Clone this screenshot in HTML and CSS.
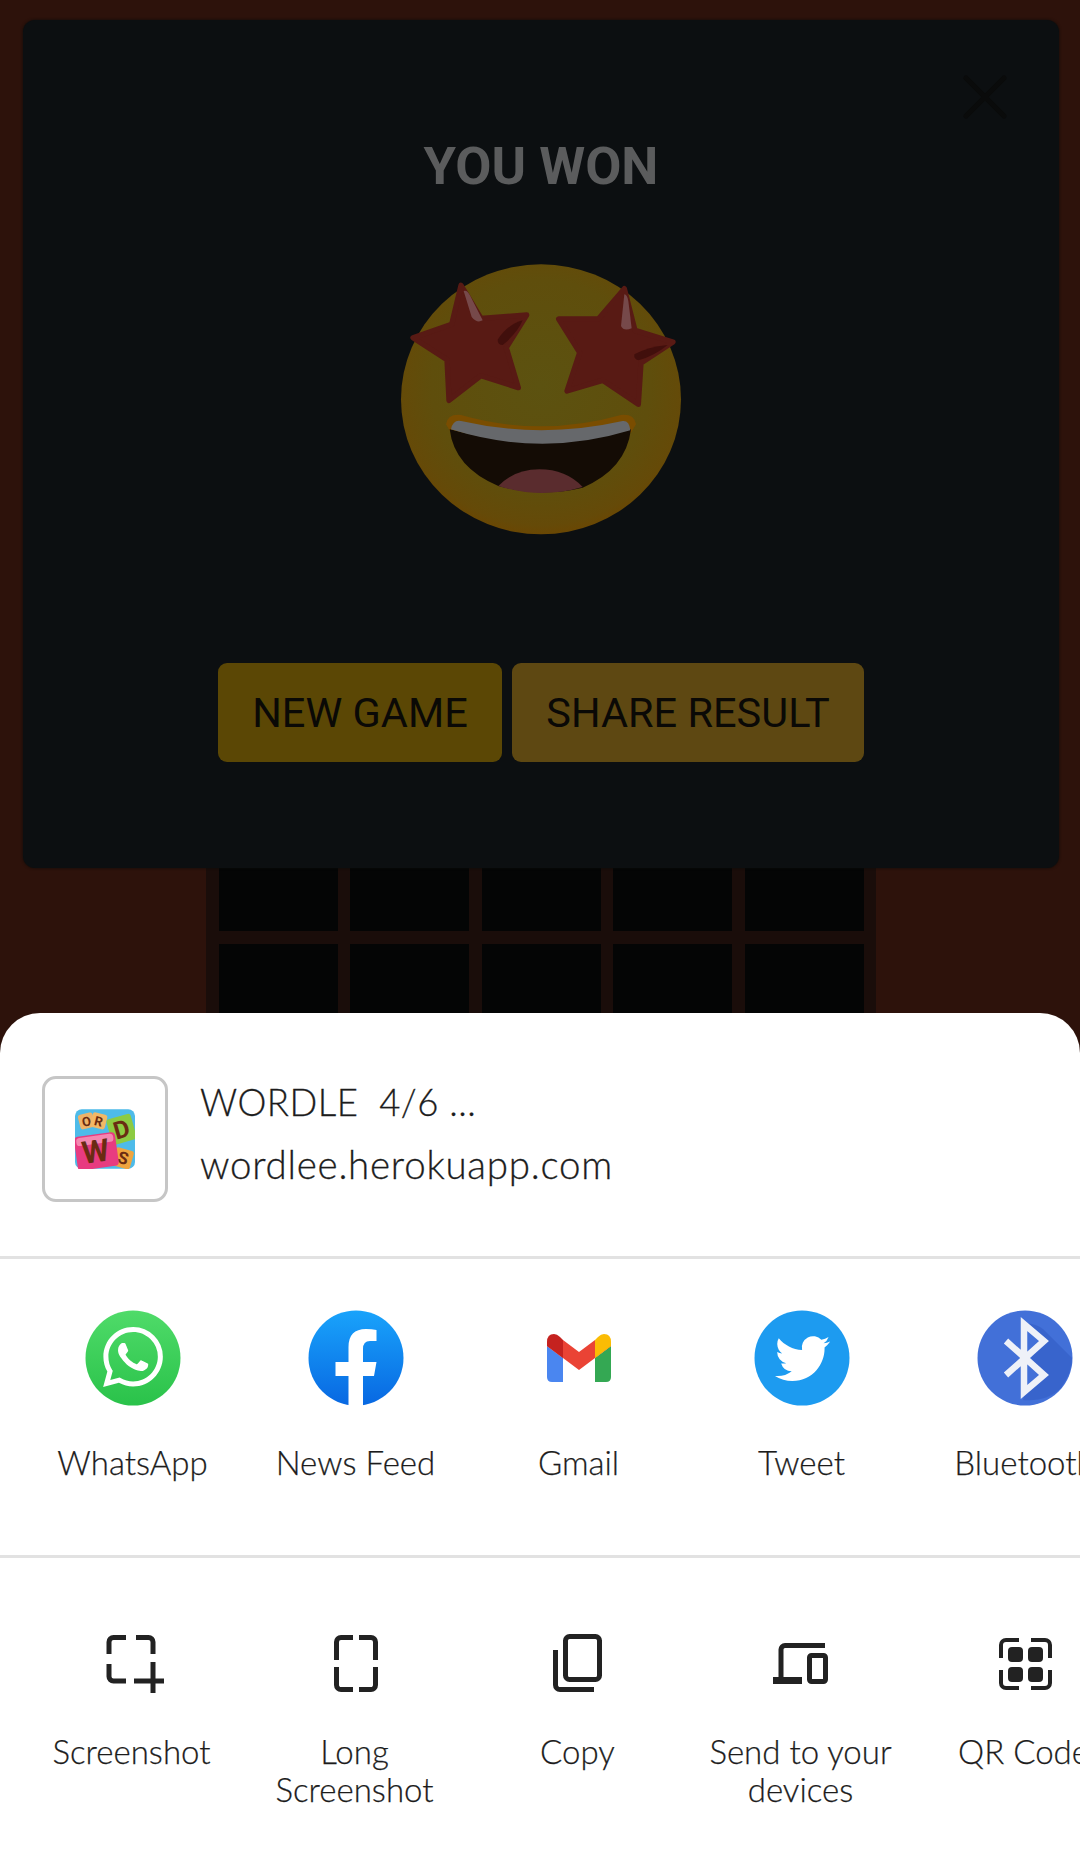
FILE: index.html
```html
<!DOCTYPE html>
<html lang="en">
<head>
<meta charset="utf-8">
<title>Wordle share</title>
<link rel="stylesheet" href="styles.css">
</head>
<body>
<div class="screen">
  <div class="board">
    <div class="tile"></div><div class="tile"></div><div class="tile"></div><div class="tile"></div><div class="tile"></div>
    <div class="tile"></div><div class="tile"></div><div class="tile"></div><div class="tile"></div><div class="tile"></div>
  </div>

  <section class="modal">
    <svg class="close" viewBox="0 0 44 44"><path d="M3 3 41 41M41 3 3 41"/></svg>
    <h1 class="title">YOU WON</h1>
    <svg class="emoji" viewBox="0 0 960 930">
      <defs>
        <radialGradient id="face" cx="50%" cy="45%" r="56%">
          <stop offset="0" stop-color="#5c5210"/>
          <stop offset=".7" stop-color="#5f4e0c"/>
          <stop offset=".92" stop-color="#654a08"/>
          <stop offset="1" stop-color="#6b4602"/>
        </radialGradient>
      </defs>
      <ellipse cx="480" cy="475" rx="420" ry="405" fill="url(#face)"/>
      <path class="star" d="M240 133 300 232 437 222 376 320 412 440 300 404 204 478 198 356 96 290 212 250Z"/>
      <path class="star" d="M730 143 762 268 876 303 780 366 772 490 665 418 558 450 596 335 533 234 652 234Z"/>
      <path d="M248 150Q258 145 268 165L305 238Q288 248 272 228Z" fill="#76494a"/>
      <path d="M730 160Q738 160 742 180L752 262Q728 272 720 255Z" fill="#76494a"/>
      <path d="M350 296Q380 250 425 238 410 275 365 312Q350 312 350 296Z" fill="#410f0c"/>
      <path d="M760 340Q800 318 860 312 820 345 772 358Q758 355 760 340Z" fill="#410f0c"/>
      <path d="M195 550Q200 518 240 522 480 590 720 522 760 518 765 550L750 575 210 575Z" fill="#7a4d00"/>
      <path d="M206 565Q480 640 750 565 735 685 605 740 480 770 352 735 220 680 206 565Z" fill="#140c05"/>
      <path d="M210 565Q216 535 240 540 480 595 725 540 745 538 748 568 480 650 210 565Z" fill="#66686b"/>
      <path d="M352 735Q400 685 475 685 555 685 605 738 480 775 352 735Z" fill="#5a2c2e"/>
    </svg>
    <div class="buttons">
      <button class="btn new">NEW GAME</button>
      <button class="btn share">SHARE RESULT</button>
    </div>
  </section>

  <section class="sheet">
    <header class="preview">
      <div class="thumb">
        <svg class="thumb-art" viewBox="0 0 177 175">
          <rect width="177" height="175" rx="20" fill="#4ebbe9"/>
          <g transform="rotate(-14 35 35)"><rect x="12" y="12" width="44" height="44" rx="8" fill="#eeb269"/><text x="34" y="49" class="art-text small">O</text></g>
          <g transform="rotate(14 70 35)"><rect x="48" y="12" width="44" height="44" rx="8" fill="#f2b866"/><text x="70" y="49" class="art-text small">R</text></g>
          <g transform="rotate(-16 137 58)"><rect x="100" y="20" width="74" height="78" rx="8" fill="#8dcb42"/><text x="137" y="84" class="art-text mid">D</text></g>
          <g transform="rotate(16 140 147)"><rect x="114" y="116" width="54" height="56" rx="8" fill="#f0a43e"/><text x="141" y="161" class="art-text tiny">S</text></g>
          <g transform="rotate(-8 62 123)"><rect x="2" y="74" width="122" height="100" rx="12" fill="#e83b80"/><rect x="8" y="78" width="110" height="24" rx="10" fill="#f487b0"/><text x="60" y="156" class="art-text big">W</text></g>
        </svg>
      </div>
      <div class="preview-text">
        <div class="preview-title">WORDLE&nbsp;&nbsp;4/6 ...</div>
        <div class="preview-url">wordlee.herokuapp.com</div>
      </div>
    </header>

    <div class="row apps">
      <div class="item">
        <svg class="icon" viewBox="0 0 96 96"><defs><linearGradient id="wa" x1="0" y1="0" x2="0" y2="1"><stop offset="0" stop-color="#4fdb69"/><stop offset="1" stop-color="#2ac24a"/></linearGradient></defs><circle cx="48" cy="48" r="47.5" fill="url(#wa)"/><path transform="translate(18 17) scale(2.5)" fill="#fff" d="M17.472 14.382c-.297-.149-1.758-.867-2.03-.967-.273-.099-.471-.148-.67.15-.197.297-.767.966-.94 1.164-.173.199-.347.223-.644.075-.297-.15-1.255-.463-2.39-1.475-.883-.788-1.48-1.761-1.653-2.059-.173-.297-.018-.458.13-.606.134-.133.298-.347.446-.52.149-.174.198-.298.298-.497.099-.198.05-.371-.025-.52-.075-.149-.669-1.612-.916-2.207-.242-.579-.487-.5-.669-.51-.173-.008-.371-.01-.57-.01-.198 0-.52.074-.792.372-.272.297-1.04 1.016-1.04 2.479 0 1.462 1.065 2.875 1.213 3.074.149.198 2.096 3.2 5.077 4.487.709.306 1.262.489 1.694.625.712.227 1.36.195 1.871.118.571-.085 1.758-.719 2.006-1.413.248-.694.248-1.289.173-1.413-.074-.124-.272-.198-.57-.347m-5.421 7.403h-.004a9.87 9.87 0 01-5.031-1.378l-.361-.214-3.741.982.998-3.648-.235-.374a9.86 9.86 0 01-1.51-5.26c.001-5.45 4.436-9.884 9.888-9.884 2.64 0 5.122 1.03 6.988 2.898a9.825 9.825 0 012.893 6.994c-.003 5.45-4.437 9.884-9.885 9.884m8.413-18.297A11.815 11.815 0 0012.05 0C5.495 0 .16 5.335.157 11.892c0 2.096.547 4.142 1.588 5.945L.057 24l6.305-1.654a11.882 11.882 0 005.683 1.448h.005c6.554 0 11.89-5.335 11.893-11.893a11.821 11.821 0 00-3.48-8.413Z"/></svg>
        <span class="label">WhatsApp</span>
      </div>
      <div class="item">
        <svg class="icon" viewBox="0 0 96 96"><defs><linearGradient id="fb" x1="0" y1="0" x2="0" y2="1"><stop offset="0" stop-color="#19a3fb"/><stop offset="1" stop-color="#0868e2"/></linearGradient></defs><circle cx="48" cy="48" r="47.5" fill="url(#fb)"/><path fill="#fff" d="M40.500 97V66H27.500V52H40.500V37Q40.500 19 58 19 64 19 68.500 20V31H62Q55 31 55 39V52H68.500L66 66H55V97Z"/></svg>
        <span class="label">News Feed</span>
      </div>
      <div class="item">
        <svg class="icon" viewBox="0 0 96 96">
          <path d="M16 36 32 48V72H21Q16 72 16 67Z" fill="#4a86f0"/>
          <path d="M80 36 64 48V72H75Q80 72 80 67Z" fill="#34a853"/>
          <path d="M64 30 48 42 32 30 16 36 32 48 48 60 64 48 80 36Z" fill="#ea4335"/>
          <path d="M16 36V32Q16 24 23 24 26 24 29 27L32 30V48Z" fill="#c5221f"/>
          <path d="M80 36V32Q80 24 73 24 70 24 67 27L64 30V48Z" fill="#fbbc04"/>
        </svg>
        <span class="label">Gmail</span>
      </div>
      <div class="item">
        <svg class="icon" viewBox="0 0 96 96"><circle cx="48" cy="48" r="47.5" fill="#1d9bf0"/><path transform="translate(21 21) scale(2.3)" fill="#fff" d="M23.953 4.57a10 10 0 01-2.825.775 4.958 4.958 0 002.163-2.723c-.951.555-2.005.959-3.127 1.184a4.92 4.92 0 00-8.384 4.482C7.69 8.095 4.067 6.13 1.64 3.162a4.822 4.822 0 00-.666 2.475c0 1.71.87 3.213 2.188 4.096a4.904 4.904 0 01-2.228-.616v.06a4.923 4.923 0 003.946 4.827 4.996 4.996 0 01-2.212.085 4.936 4.936 0 004.604 3.417 9.867 9.867 0 01-6.102 2.105c-.39 0-.779-.023-1.17-.067a13.995 13.995 0 007.557 2.209c9.053 0 13.998-7.496 13.998-13.985 0-.21 0-.42-.015-.63A9.935 9.935 0 0024 4.59z"/></svg>
        <span class="label">Tweet</span>
      </div>
      <div class="item">
        <svg class="icon" viewBox="0 0 96 96"><circle cx="48" cy="48" r="47.500" fill="#4270d8"/><path d="M48 13 68 31 54 48 68 65 48 83 46 90Q70 92 84 78 95 62 95 48L66 19Q60 14 48 13Z" fill="#3560c8" opacity=".7"/><path d="M29 31 67 65 47 82V14L67 31 29 65" fill="none" stroke="#eef1f8" stroke-width="6.500"/></svg>
        <span class="label">Bluetooth</span>
      </div>
    </div>

    <div class="row actions">
      <div class="item">
        <svg class="icon line" viewBox="0 0 96 96"><path d="M25 38V26a4.500 4.500 0 0 1 4.500-4.500H42M52 21.500H64.500a4.500 4.500 0 0 1 4.500 4.500V38M25 48V60.500a4.500 4.500 0 0 0 4.500 4.500H42M50 65H80M69 46V77"/></svg>
        <span class="label">Screenshot</span>
      </div>
      <div class="item">
        <svg class="icon line" viewBox="0 0 96 96"><path d="M29.500 44V26a4.500 4.500 0 0 1 4.500-4.500H46M52 21.500H64a4.500 4.500 0 0 1 4.500 4.500V44M29.500 51V69a4.500 4.500 0 0 0 4.500 4.500H46M52 73.500H64a4.500 4.500 0 0 0 4.500-4.500V51"/></svg>
        <span class="label">Long Screenshot</span>
      </div>
      <div class="item">
        <svg class="icon line" viewBox="0 0 96 96"><rect x="35.500" y="20.500" width="34" height="43" rx="4"/><path d="M25.500 34V69a4.500 4.500 0 0 0 4.500 4.500H64"/></svg>
        <span class="label">Copy</span>
      </div>
      <div class="item">
        <svg class="icon line" viewBox="0 0 96 96"><path d="M72 29.500H32a4 4 0 0 0-4 4V62"/><path class="solid" d="M20 61H49V68H20Z"/><rect x="56.500" y="39.500" width="16" height="26" rx="2"/></svg>
        <span class="label">Send to your devices</span>
      </div>
      <div class="item">
        <svg class="icon line thin" viewBox="0 0 96 96"><path d="M25 42V29a5 5 0 0 1 5-5H43M55 24H69a5 5 0 0 1 5 5V42M25 54V67a5 5 0 0 0 5 5H43M55 72H69a5 5 0 0 0 5-5V54"/><rect class="solid" x="32" y="31" width="15" height="15" rx="4"/><rect class="solid" x="52" y="31" width="15" height="15" rx="4"/><rect class="solid" x="32" y="51" width="15" height="15" rx="4"/><rect class="solid" x="52" y="51" width="15" height="15" rx="4"/></svg>
        <span class="label">QR Code</span>
      </div>
    </div>
  </section>
</div>
</body>
</html>
```

FILE: styles.css
```css
* { box-sizing: border-box; }
html, body { margin: 0; padding: 0; }
body { background: #2d120b; font-family: Lato, "Liberation Sans", sans-serif; }

.screen {
  position: relative;
  width: 1080px;
  height: 1855px;
  overflow: hidden;
  background: #2d120b;
  display: flex;
  flex-direction: column;
  align-items: center;
}

.board {
  margin-top: 800px;
  margin-left: 1px;
  width: 670px;
  padding: 13px;
  background: #1a0d0a;
  display: grid;
  grid-template-columns: repeat(5, 119px);
  grid-auto-rows: 118px;
  gap: 13px 12.500px;
}
.tile { background: #040505; }

.modal {
  position: absolute;
  left: 23px;
  top: 20px;
  width: 1036px;
  height: 848px;
  background: #0c0f11;
  border-radius: 12px;
  box-shadow: 0 0 3px #0d0c0a;
  display: flex;
  flex-direction: column;
  align-items: center;
}
.close {
  position: absolute;
  right: 52px;
  top: 55px;
  width: 44px;
  height: 44px;
}
.close path { stroke: #0a0b0b; stroke-width: 5; fill: none; stroke-linecap: round; }
.title {
  margin: 116px 0 0;
  font-family: Roboto, sans-serif;
  font-size: 52.5px;
  line-height: 60px;
  font-weight: 700;
  color: #5b5c5d;
}
.emoji { width: 320px; height: 310px; margin-top: 45px; }
.star { fill: #581a14; stroke: #581a14; stroke-width: 16; stroke-linejoin: round; }
.buttons { margin-top: 112px; display: flex; gap: 10px; }
.btn {
  height: 99px;
  border: 0;
  border-radius: 9px;
  color: #0a0906;
  font: 400 41.5px Roboto, sans-serif;
  padding: 0;
}
.btn.new { width: 284px; background: #5b4705; }
.btn.share { width: 352px; background: #5e4812; }

.sheet {
  position: absolute;
  left: 0;
  top: 1013px;
  width: 1080px;
  height: 842px;
  background: #fff;
  border-radius: 40px 40px 0 0;
  color: #262626;
}
.preview {
  height: 246px;
  border-bottom: 3px solid #e2e2e2;
  padding: 63px 0 0 42px;
  display: flex;
  gap: 32px;
}
.thumb {
  width: 126px;
  height: 126px;
  border: 3px solid #c6c6c6;
  border-radius: 14px;
  display: flex;
  align-items: center;
  justify-content: center;
}
.thumb-art { width: 60px; height: 60px; }
.art-text { font-family: Roboto, sans-serif; font-weight: 700; fill: #6a2b12; text-anchor: middle; }
.art-text.small { font-size: 38px; }
.art-text.tiny { font-size: 50px; }
.art-text.mid { font-size: 72px; }
.art-text.big { font-size: 92px; }
.preview-text { display: flex; flex-direction: column; gap: 24px; padding-top: 7px; font-weight: 300; line-height: 38px; color: #1c1c1c; -webkit-text-stroke: .3px #1c1c1c; }
.preview-title { font-size: 36.5px; letter-spacing: .5px; }
.preview-url { font-size: 38.5px; letter-spacing: .75px; }

.row {
  display: flex;
  margin-left: 20px;
  width: 1115px;
}
.apps { height: 299px; padding-top: 51px; border-bottom: 3px solid #e2e2e2; margin-left: 0; padding-left: 21px; width: 1080px; overflow: hidden; }
.actions { padding-top: 58px; }
.item {
  flex: 0 0 223px;
  display: flex;
  flex-direction: column;
  align-items: center;
}
.icon { width: 96px; height: 96px; flex: none; display: block; }
.label {
  margin-top: 37px;
  width: 223px;
  padding: 0 16px;
  text-align: center;
  font-size: 33px;
  line-height: 38px;
  font-weight: 300;
  color: #1c1c1c;
  -webkit-text-stroke: .25px #1c1c1c;
}
.apps .label { white-space: nowrap; padding: 0; }
.actions .label { margin-top: 20px; }

.line path, .line rect { fill: none; stroke: #222; stroke-width: 5; }
.line .solid { fill: #222; stroke: none; }
.line.thin path { stroke-width: 4; }
```
